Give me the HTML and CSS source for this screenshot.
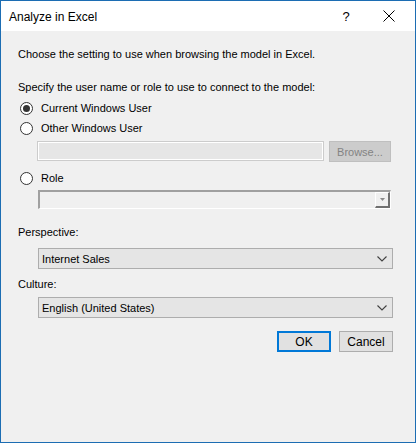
FILE: index.html
```html
<!DOCTYPE html>
<html>
<head>
<meta charset="utf-8">
<link rel="stylesheet" href="styles.css">
</head>
<body>
<div class="window">
  <div class="titlebar">
    <span class="title">Analyze in Excel</span>
    <span class="help">?</span>
    <span class="close">
      <svg width="12" height="12" viewBox="0 0 12 12"><path d="M0.5 0.5 L11.5 11.5 M11.5 0.5 L0.5 11.5" stroke="#000" stroke-width="1" fill="none"/></svg>
    </span>
  </div>
  <div class="content">
    <div class="intro">Choose the setting to use when browsing the model in Excel.</div>
    <div class="specify">Specify the user name or role to use to connect to the model:</div>
    <div class="radio-row first">
      <span class="radio checked"></span><span>Current Windows User</span>
    </div>
    <div class="radio-row">
      <span class="radio"></span><span>Other Windows User</span>
    </div>
    <div class="user-row">
      <div class="textbox"></div>
      <div class="browse">Browse...</div>
    </div>
    <div class="radio-row role-row">
      <span class="radio"></span><span>Role</span>
    </div>
    <div class="role-combo">
      <div class="role-btn">
        <svg width="5" height="3" viewBox="0 0 5 3"><path d="M0 0 H5 L2.5 3 Z" fill="#8a8a8a"/></svg>
      </div>
    </div>
    <div class="label persp-label">Perspective:</div>
    <div class="combo">
      <span>Internet Sales</span>
      <svg class="chev" width="10" height="6" viewBox="0 0 10 6"><path d="M0.5 0.5 L5 5 L9.5 0.5" stroke="#404040" stroke-width="1.1" fill="none"/></svg>
    </div>
    <div class="label culture-label">Culture:</div>
    <div class="combo culture">
      <span>English (United States)</span>
      <svg class="chev" width="10" height="6" viewBox="0 0 10 6"><path d="M0.5 0.5 L5 5 L9.5 0.5" stroke="#404040" stroke-width="1.1" fill="none"/></svg>
    </div>
    <div class="buttons">
      <div class="btn ok">OK</div>
      <div class="btn">Cancel</div>
    </div>
  </div>
</div>
</body>
</html>
```
FILE: styles.css
```css
html, body {
  margin: 0;
  padding: 0;
  background: #ffffff;
}
body {
  font-family: "Segoe UI", "Liberation Sans", Arial, sans-serif;
  font-size: 11px;
  color: #000;
}
.window {
  box-sizing: border-box;
  width: 416px;
  height: 443px;
  border: 1px solid #1c6db3;
  background: #f0f0f0;
  display: flex;
  flex-direction: column;
}
.titlebar {
  height: 30px;
  background: #ffffff;
  display: flex;
  align-items: center;
  flex-shrink: 0;
}
.title {
  margin-left: 8px;
  font-size: 12px;
  flex: 1;
  padding-top: 1px;
}
.help {
  width: 14px;
  text-align: center;
  margin-right: 30px;
  font-size: 13px;
}
.close {
  width: 12px;
  height: 12px;
  margin-right: 20px;
  display: flex;
}
.content {
  padding: 0 22px 0 17px;
  display: flex;
  flex-direction: column;
}
.intro {
  margin-top: 15px;
  line-height: 16px;
}
.specify {
  margin-top: 17px;
  line-height: 16px;
}
.radio-row {
  height: 20px;
  display: flex;
  align-items: center;
}
.radio-row.first {
  margin-top: 3px;
}
.radio {
  box-sizing: border-box;
  width: 13px;
  height: 13px;
  border: 1px solid #333333;
  border-radius: 50%;
  background: #ffffff;
  margin-left: 2px;
  margin-right: 8px;
  display: flex;
  align-items: center;
  justify-content: center;
}
.radio.checked::after {
  content: "";
  width: 7px;
  height: 7px;
  border-radius: 50%;
  background: #333333;
}
.user-row {
  margin-top: 3px;
  margin-left: 19px;
  display: flex;
  gap: 5px;
}
.textbox {
  box-sizing: border-box;
  width: 287px;
  height: 20px;
  background: #e6e6e6;
  border: 1px solid #cccccc;
  box-shadow: inset 0 0 0 1px #ffffff;
}
.browse {
  box-sizing: border-box;
  width: 62px;
  height: 21px;
  background: #cccccc;
  border: 1px solid #bfbfbf;
  color: #838383;
  display: flex;
  align-items: center;
  justify-content: center;
}
.role-row {
  margin-top: 6px;
}
.role-combo {
  box-sizing: border-box;
  margin-top: 2px;
  margin-left: 20px;
  width: 353px;
  height: 19px;
  background: #f0f0f0;
  border-top: 2px solid #a0a0a0;
  border-left: 2px solid #a0a0a0;
  border-bottom: 1px solid #ffffff;
  border-right: 1px solid #ffffff;
  display: flex;
  justify-content: flex-end;
}
.role-btn {
  box-sizing: border-box;
  width: 15px;
  height: 16px;
  background: #f0f0f0;
  border-top: 1px solid #ffffff;
  border-left: 1px solid #ffffff;
  border-right: 2px solid #707070;
  border-bottom: 2px solid #707070;
  display: flex;
  align-items: center;
  justify-content: center;
}
.label {
  line-height: 16px;
}
.persp-label {
  margin-top: 15px;
}
.culture-label {
  margin-top: 7px;
}
.combo {
  box-sizing: border-box;
  margin-top: 8px;
  margin-left: 20px;
  width: 355px;
  height: 21px;
  background: #e5e5e5;
  border: 1px solid #adadad;
  display: flex;
  align-items: center;
  padding-left: 3px;
  padding-right: 5px;
}
.combo span {
  flex: 1;
}
.combo.culture {
  margin-top: 5px;
}
.buttons {
  margin-top: 13px;
  display: flex;
  justify-content: flex-end;
  gap: 8px;
}
.btn {
  box-sizing: border-box;
  width: 54px;
  height: 21px;
  background: #e1e1e1;
  border: 1px solid #adadad;
  display: flex;
  align-items: center;
  justify-content: center;
  font-size: 12px;
}
.btn.ok {
  border: 2px solid #0078d7;
}
```
